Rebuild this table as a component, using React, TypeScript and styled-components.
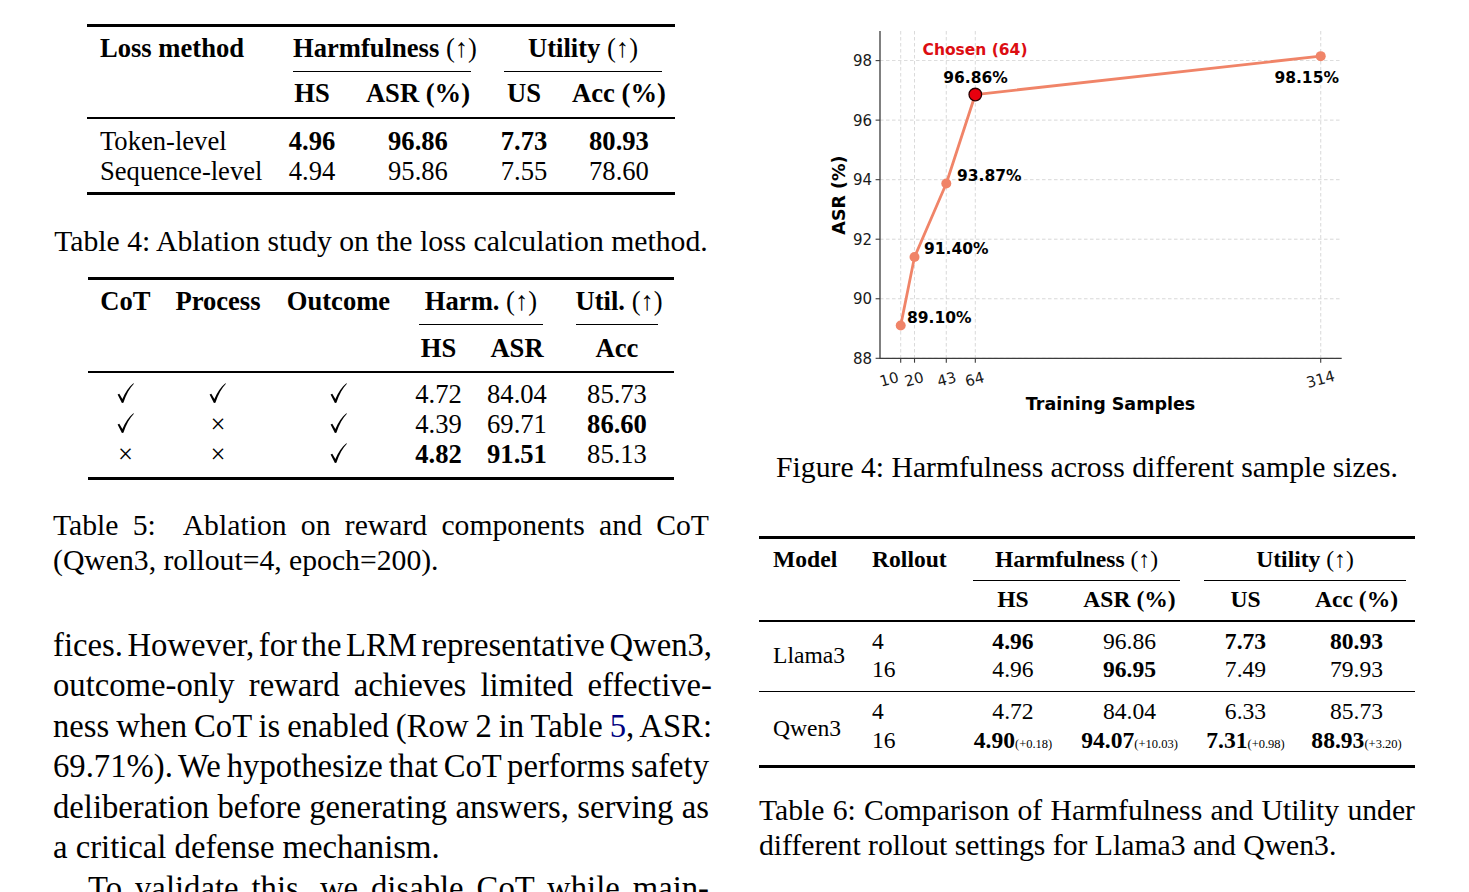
import React from "react";
import styled, { createGlobalStyle } from "styled-components";

const GlobalStyle = createGlobalStyle`
  html, body { margin: 0; padding: 0; background: #ffffff; }
  body {
    font-family: "Liberation Serif", "Times New Roman", "DejaVu Serif", serif;
    color: #000;
    overflow: hidden;
  }
`;

const Page = styled.div`
  display: grid;
  grid-template-columns: 656px 656px;
  column-gap: 50px;
  align-items: start;
  padding: 24px 0 0 53px;
  width: 1469px;
  height: 892px;
  box-sizing: border-box;
  overflow: hidden;
`;

const Column = styled.div`
  display: flex;
  flex-direction: column;
  min-width: 0;
`;

/* ---------- tables ---------- */

const Tbl = styled.table<{ $size: number; $lh: number; $width: number; $mt?: number }>`
  border-collapse: separate;
  border-spacing: 0;
  table-layout: fixed;
  width: ${(p) => p.$width}px;
  margin: ${(p) => p.$mt ?? 0}px auto 0;
  font-size: ${(p) => p.$size}px;
  line-height: ${(p) => p.$lh}px;
  border-top: 3px solid #000;
  border-bottom: 3px solid #000;
`;

const Th = styled.th<{ $align?: "left" | "center" }>`
  padding: 0;
  font-weight: 700;
  text-align: ${(p) => p.$align ?? "center"};
  vertical-align: top;
  white-space: nowrap;
`;

const HeadBox = styled.div<{
  $pt: number;
  $pb: number;
  $rule?: boolean;
  $ruled?: boolean;
  $l?: number;
  $r?: number;
  $pl?: number;
}>`
  padding: ${(p) => p.$pt}px 0 ${(p) => p.$pb}px ${(p) => p.$pl ?? 0}px;
  margin: 0 ${(p) => p.$r ?? 0}px 0 ${(p) => p.$l ?? 0}px;
  border-bottom: ${(p) => (p.$ruled ? `1px solid ${p.$rule ? "#000" : "transparent"}` : "0")};
`;

const Row = styled.tr<{ $pt?: number; $pb?: number; $rule?: number }>`
  & > td {
    padding-top: ${(p) => p.$pt ?? 0}px;
    padding-bottom: ${(p) => p.$pb ?? 0}px;
    border-top: ${(p) => (p.$rule ? `${p.$rule}px solid #000` : "0")};
  }
`;

const Td = styled.td<{ $align?: "left" | "center"; $pl?: number; $bold?: boolean }>`
  padding-left: ${(p) => p.$pl ?? 0}px;
  padding-right: 0;
  text-align: ${(p) => p.$align ?? "center"};
  font-weight: ${(p) => (p.$bold ? 700 : 400)};
  vertical-align: top;
  white-space: nowrap;
`;

const SpanTd = styled(Td)<{ $spanPb: number }>`
  && {
    vertical-align: middle;
    padding-bottom: ${(p) => p.$spanPb}px;
  }
`;

const Arrow = styled.span`
  font-weight: 400;
`;

const Delta = styled.span`
  font-size: 12.5px;
  font-weight: 400;
`;

const Strong = styled.b`
  font-weight: 700;
`;

const CheckSvg = styled.svg`
  display: inline-block;
  vertical-align: baseline;
  width: 17px;
  height: 20px;
  overflow: visible;
`;

const CheckPath = styled.path`
  fill: #000;
`;

const CheckMark: React.FC = () => (
  <CheckSvg viewBox="0 0 17 20" aria-label="✓">
    <CheckPath d="M0.6 11.6 L2.3 10.7 L5.4 15.9 C8.1 9.4 12 3.8 16.4 0.2 L16.9 0.8 C12.9 4.9 9.2 11.2 6.4 19.7 L4.9 19.9 Z" />
  </CheckSvg>
);

/* ---------- text ---------- */

const Caption = styled.div<{ $mt: number; $center?: boolean }>`
  margin-top: ${(p) => p.$mt}px;
  font-size: 29.7px;
  line-height: 35.6px;
  text-align: ${(p) => (p.$center ? "center" : "left")};
`;

const Body = styled.div<{ $mt: number }>`
  margin-top: ${(p) => p.$mt}px;
  font-size: 32.7px;
  line-height: 40.5px;
`;

const JLine = styled.div<{ $last?: boolean; $protrude?: number; $indent?: number; $tight?: number }>`
  text-align: ${(p) => (p.$last ? "left" : "justify")};
  text-align-last: ${(p) => (p.$last ? "left" : "justify")};
  margin-right: ${(p) => -(p.$protrude ?? 0)}px;
  text-indent: ${(p) => p.$indent ?? 0}px;
  word-spacing: ${(p) => (p.$last ? 0 : -(p.$tight ?? 0))}px;
`;

const Ref = styled.span`
  color: #000080;
`;

/* ---------- chart ---------- */

const ChartSvg = styled.svg`
  display: block;
  margin-top: 1px;
  width: 656px;
  height: 395px;
  overflow: visible;
`;

const GridLine = styled.line`
  stroke: #c8c8c8;
  stroke-width: 0.8;
  stroke-dasharray: 3.5 2.5;
  opacity: 0.85;
`;

const Spine = styled.path`
  fill: none;
  stroke: #3c3c3c;
  stroke-width: 1.3;
`;

const TickMark = styled.line`
  stroke: #3c3c3c;
  stroke-width: 1.1;
`;

const DataLine = styled.polyline`
  fill: none;
  stroke: #f08468;
  stroke-width: 2.8;
  stroke-linejoin: round;
`;

const Dot = styled.circle<{ $chosen?: boolean }>`
  fill: ${(p) => (p.$chosen ? "#e8000e" : "#f08468")};
  stroke: ${(p) => (p.$chosen ? "#2a0000" : "none")};
  stroke-width: ${(p) => (p.$chosen ? 1.3 : 0)};
`;

const TickText = styled.text`
  font-family: "DejaVu Sans", sans-serif;
  font-size: 15px;
  fill: #1a1a1a;
`;

const AxisLabel = styled.text`
  font-family: "DejaVu Sans", sans-serif;
  font-size: 17.5px;
  font-weight: 700;
  fill: #000;
`;

const Annot = styled.text<{ $color?: string }>`
  font-family: "DejaVu Sans", sans-serif;
  font-size: 15.5px;
  font-weight: 700;
  fill: ${(p) => p.$color ?? "#000"};
`;

const X0 = 900.7;
const XS = 1.3816;
const Y0 = 358.3;
const YS = 29.77;
const sx = (v: number) => X0 + (v - 10) * XS;
const sy = (v: number) => Y0 - (v - 88) * YS;
const AX_L = 880;
const AX_R = 1341.7;
const AX_T = 31;
const AX_B = 358.3;

const points: [number, number][] = [
  [10, 89.1],
  [20, 91.4],
  [43, 93.87],
  [64, 96.86],
  [314, 98.15],
];
const yTicks = [88, 90, 92, 94, 96, 98];
const xTicks = [10, 20, 43, 64, 314];
const xLabelCenters: Record<number, number> = { 10: 889, 20: 914, 43: 946.5, 64: 974.5, 314: 1320.5 };

const Chart: React.FC = () => (
  <ChartSvg viewBox="759 25 656 395">
    {yTicks.map((v) => (
      <GridLine key={`gy${v}`} x1={AX_L} x2={AX_R} y1={sy(v)} y2={sy(v)} />
    ))}
    {xTicks.map((v) => (
      <GridLine key={`gx${v}`} x1={sx(v)} x2={sx(v)} y1={AX_T} y2={AX_B} />
    ))}
    <Spine d={`M${AX_L} ${AX_T} V${AX_B} H${AX_R}`} />
    {yTicks.map((v) => (
      <g key={`ty${v}`}>
        <TickMark x1={AX_L - 4.4} x2={AX_L} y1={sy(v)} y2={sy(v)} />
        <TickText x={872} y={sy(v) + 5.4} textAnchor="end">
          {v}
        </TickText>
      </g>
    ))}
    {xTicks.map((v) => {
      const cx = xLabelCenters[v];
      const cy = 379;
      return (
        <g key={`tx${v}`}>
          <TickMark x1={sx(v)} x2={sx(v)} y1={AX_B} y2={AX_B + 4.4} />
          <TickText
            x={cx}
            y={cy + 5.4}
            textAnchor="middle"
            transform={`rotate(-15 ${cx} ${cy})`}
          >
            {v}
          </TickText>
        </g>
      );
    })}
    <AxisLabel x={1110.5} y={410} textAnchor="middle">
      Training Samples
    </AxisLabel>
    <AxisLabel x={845} y={195} textAnchor="middle" transform="rotate(-90 845 195)">
      ASR (%)
    </AxisLabel>

    <DataLine points={points.map(([x, y]) => `${sx(x)},${sy(y)}`).join(" ")} />
    {points.map(([x, y]) =>
      x === 64 ? null : <Dot key={`p${x}`} cx={sx(x)} cy={sy(y)} r={5} />
    )}
    <Dot $chosen cx={sx(64)} cy={sy(96.86)} r={6.3} />

    <Annot x={975} y={55} textAnchor="middle" $color="#dc0d12">
      Chosen (64)
    </Annot>
    <Annot x={975.5} y={83} textAnchor="middle">
      96.86%
    </Annot>
    <Annot x={1306.7} y={83} textAnchor="middle">
      98.15%
    </Annot>
    <Annot x={957} y={181}>93.87%</Annot>
    <Annot x={924} y={254}>91.40%</Annot>
    <Annot x={907} y={323}>89.10%</Annot>
  </ChartSvg>
);

/* ---------- tables content ---------- */

const Table4: React.FC = () => (
  <Tbl $size={26.6} $lh={30} $width={588}>
    <colgroup>
      <col style={{ width: 193 }} />
      <col style={{ width: 64 }} />
      <col style={{ width: 148 }} />
      <col style={{ width: 64 }} />
      <col style={{ width: 119 }} />
    </colgroup>
    <thead>
      <tr>
        <Th $align="left">
          <HeadBox $pt={6} $pb={8} $ruled $pl={13}>
            Loss method
          </HeadBox>
        </Th>
        <Th colSpan={2}>
          <HeadBox $pt={6} $pb={8} $ruled $rule $l={13} $r={21}>
            Harmfulness <Arrow>(↑)</Arrow>
          </HeadBox>
        </Th>
        <Th colSpan={2}>
          <HeadBox $pt={6} $pb={8} $ruled $rule $l={12} $r={13}>
            Utility <Arrow>(↑)</Arrow>
          </HeadBox>
        </Th>
      </tr>
      <tr>
        <Th>
          <HeadBox $pt={6} $pb={9} />
        </Th>
        <Th>
          <HeadBox $pt={6} $pb={9}>HS</HeadBox>
        </Th>
        <Th>
          <HeadBox $pt={6} $pb={9}>ASR (%)</HeadBox>
        </Th>
        <Th>
          <HeadBox $pt={6} $pb={9}>US</HeadBox>
        </Th>
        <Th>
          <HeadBox $pt={6} $pb={9} $pl={7}>
            Acc (%)
          </HeadBox>
        </Th>
      </tr>
    </thead>
    <tbody>
      <Row $pt={7} $rule={2}>
        <Td $align="left" $pl={13}>Token-level</Td>
        <Td $bold>4.96</Td>
        <Td $bold>96.86</Td>
        <Td $bold>7.73</Td>
        <Td $bold $pl={7}>80.93</Td>
      </Row>
      <Row $pb={6}>
        <Td $align="left" $pl={13}>Sequence-level</Td>
        <Td>4.94</Td>
        <Td>95.86</Td>
        <Td>7.55</Td>
        <Td $pl={7}>78.60</Td>
      </Row>
    </tbody>
  </Tbl>
);

const CHECK = <CheckMark />;
const CROSS = <>×</>;

const t5rows: { c: React.ReactNode[]; v: [string, boolean][] }[] = [
  { c: [CHECK, CHECK, CHECK], v: [["4.72", false], ["84.04", false], ["85.73", false]] },
  { c: [CHECK, CROSS, CHECK], v: [["4.39", false], ["69.71", false], ["86.60", true]] },
  { c: [CROSS, CROSS, CHECK], v: [["4.82", true], ["91.51", true], ["85.13", false]] },
];

const Table5: React.FC = () => (
  <Tbl $size={26.6} $lh={30} $width={585} $mt={17}>
    <colgroup>
      <col style={{ width: 74 }} />
      <col style={{ width: 111 }} />
      <col style={{ width: 130 }} />
      <col style={{ width: 70 }} />
      <col style={{ width: 87 }} />
      <col style={{ width: 113 }} />
    </colgroup>
    <thead>
      <tr>
        <Th>
          <HeadBox $pt={6} $pb={8} $ruled>CoT</HeadBox>
        </Th>
        <Th>
          <HeadBox $pt={6} $pb={8} $ruled>Process</HeadBox>
        </Th>
        <Th>
          <HeadBox $pt={6} $pb={8} $ruled>Outcome</HeadBox>
        </Th>
        <Th colSpan={2}>
          <HeadBox $pt={6} $pb={8} $ruled $rule $l={16} $r={18}>
            Harm. <Arrow>(↑)</Arrow>
          </HeadBox>
        </Th>
        <Th>
          <HeadBox $pt={6} $pb={8} $ruled $rule $l={15} $r={16}>
            Util. <Arrow>(↑)</Arrow>
          </HeadBox>
        </Th>
      </tr>
      <tr>
        <Th>
          <HeadBox $pt={8} $pb={8} />
        </Th>
        <Th>
          <HeadBox $pt={8} $pb={8} />
        </Th>
        <Th>
          <HeadBox $pt={8} $pb={8} />
        </Th>
        <Th>
          <HeadBox $pt={8} $pb={8}>HS</HeadBox>
        </Th>
        <Th>
          <HeadBox $pt={8} $pb={8}>ASR</HeadBox>
        </Th>
        <Th>
          <HeadBox $pt={8} $pb={8}>Acc</HeadBox>
        </Th>
      </tr>
    </thead>
    <tbody>
      {t5rows.map((r, i) => (
        <Row
          key={i}
          $pt={i === 0 ? 6 : 0}
          $pb={i === t5rows.length - 1 ? 8 : 0}
          $rule={i === 0 ? 2 : 0}
        >
          {r.c.map((c, j) => (
            <Td key={`c${j}`}>{c}</Td>
          ))}
          {r.v.map(([t, b], j) => (
            <Td key={`v${j}`} $bold={b}>
              {t}
            </Td>
          ))}
        </Row>
      ))}
    </tbody>
  </Tbl>
);

const Table6: React.FC = () => (
  <Tbl $size={23.6} $lh={28.5} $width={656} $mt={50.7}>
    <colgroup>
      <col style={{ width: 99 }} />
      <col style={{ width: 102 }} />
      <col style={{ width: 106 }} />
      <col style={{ width: 127 }} />
      <col style={{ width: 105 }} />
      <col style={{ width: 117 }} />
    </colgroup>
    <thead>
      <tr>
        <Th $align="left">
          <HeadBox $pt={6} $pb={7} $ruled $pl={14}>
            Model
          </HeadBox>
        </Th>
        <Th $align="left">
          <HeadBox $pt={6} $pb={7} $ruled $pl={14}>
            Rollout
          </HeadBox>
        </Th>
        <Th colSpan={2}>
          <HeadBox $pt={6} $pb={7} $ruled $rule $l={13} $r={13}>
            Harmfulness <Arrow>(↑)</Arrow>
          </HeadBox>
        </Th>
        <Th colSpan={2}>
          <HeadBox $pt={6} $pb={7} $ruled $rule $l={11} $r={9}>
            Utility <Arrow>(↑)</Arrow>
          </HeadBox>
        </Th>
      </tr>
      <tr>
        <Th>
          <HeadBox $pt={4} $pb={6.5} />
        </Th>
        <Th>
          <HeadBox $pt={4} $pb={6.5} />
        </Th>
        <Th>
          <HeadBox $pt={4} $pb={6.5}>HS</HeadBox>
        </Th>
        <Th>
          <HeadBox $pt={4} $pb={6.5}>ASR (%)</HeadBox>
        </Th>
        <Th>
          <HeadBox $pt={4} $pb={6.5}>US</HeadBox>
        </Th>
        <Th>
          <HeadBox $pt={4} $pb={6.5}>Acc (%)</HeadBox>
        </Th>
      </tr>
    </thead>
    <tbody>
      <Row $pt={4.5} $rule={2}>
        <SpanTd rowSpan={2} $align="left" $pl={14} $spanPb={7.5}>
          Llama3
        </SpanTd>
        <Td $align="left" $pl={14}>4</Td>
        <Td $bold>4.96</Td>
        <Td>96.86</Td>
        <Td $bold>7.73</Td>
        <Td $bold>80.93</Td>
      </Row>
      <Row $pb={7.5}>
        <Td $align="left" $pl={14}>16</Td>
        <Td>4.96</Td>
        <Td $bold>96.95</Td>
        <Td>7.49</Td>
        <Td>79.93</Td>
      </Row>
      <Row $pt={5} $rule={1.5}>
        <SpanTd rowSpan={2} $align="left" $pl={14} $spanPb={7}>
          Qwen3
        </SpanTd>
        <Td $align="left" $pl={14}>4</Td>
        <Td>4.72</Td>
        <Td>84.04</Td>
        <Td>6.33</Td>
        <Td>85.73</Td>
      </Row>
      <Row $pb={7}>
        <Td $align="left" $pl={14}>16</Td>
        <Td>
          <Strong>4.90</Strong>
          <Delta>(+0.18)</Delta>
        </Td>
        <Td>
          <Strong>94.07</Strong>
          <Delta>(+10.03)</Delta>
        </Td>
        <Td>
          <Strong>7.31</Strong>
          <Delta>(+0.98)</Delta>
        </Td>
        <Td>
          <Strong>88.93</Strong>
          <Delta>(+3.20)</Delta>
        </Td>
      </Row>
    </tbody>
  </Tbl>
);

export default function App() {
  return (
    <>
      <GlobalStyle />
      <Page>
        <Column>
          <Table4 />
          <Caption $mt={29} $center>
            Table 4: Ablation study on the loss calculation method.
          </Caption>
          <Table5 />
          <Caption $mt={28}>
            <JLine $tight={3}>Table 5:&nbsp; Ablation on reward components and CoT</JLine>
            <JLine $last>(Qwen3, rollout=4, epoch=200).</JLine>
          </Caption>
          <Body $mt={46}>
            <JLine $tight={4.5} $protrude={3}>
              fices. However, for the LRM representative Qwen3,
            </JLine>
            <JLine $tight={4.5} $protrude={3}>
              outcome-only reward achieves limited effective-
            </JLine>
            <JLine $tight={4.5} $protrude={3}>
              ness when CoT is enabled (Row 2 in Table <Ref>5</Ref>, ASR:
            </JLine>
            <JLine $tight={4.5}>69.71%). We hypothesize that CoT performs safety</JLine>
            <JLine $tight={4.5}>deliberation before generating answers, serving as</JLine>
            <JLine $last>a critical defense mechanism.</JLine>
            <JLine $tight={4.5} $indent={35}>
              To validate this, we disable CoT while main-
            </JLine>
          </Body>
        </Column>
        <Column>
          <Chart />
          <Caption $mt={29.7} $center>
            Figure 4: Harmfulness across different sample sizes.
          </Caption>
          <Table6 />
          <Caption $mt={24.2}>
            <JLine $tight={3}>Table 6: Comparison of Harmfulness and Utility under</JLine>
            <JLine $last>different rollout settings for Llama3 and Qwen3.</JLine>
          </Caption>
        </Column>
      </Page>
    </>
  );
}
